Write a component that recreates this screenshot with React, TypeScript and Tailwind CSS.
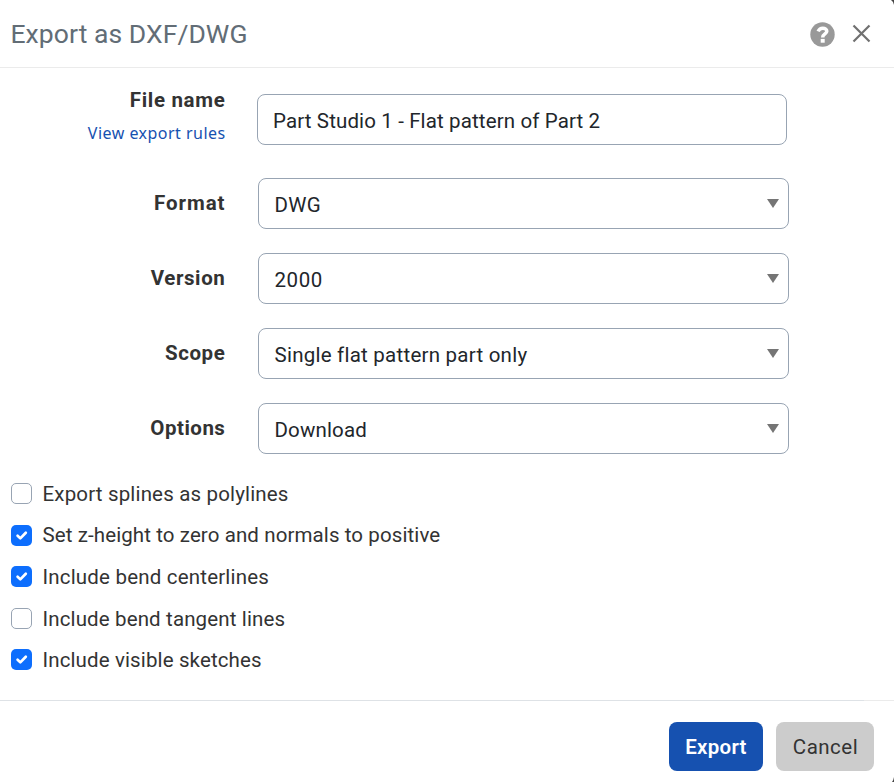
import React from 'react';

type SelectRowProps = { label: string; labelClass: string; value: string; valueClass: string };

function SelectRow({ label, labelClass, value, valueClass }: SelectRowProps) {
  return (
    <div className="flex h-[51px] items-start">
      <label className={`h-[51px] w-[226px] pr-[0.6px] text-right text-[20.5px] leading-[51px] font-bold text-[#333333] ${labelClass}`}>
        {label}
      </label>
      <div className="ml-[32px] flex h-[51px] w-[531px] items-center justify-between rounded-[8px] border border-[#98a4b3] pr-[9px] pl-[15.5px]">
        <span className={`pt-[3px] text-[20.5px] leading-[24px] text-[#22262b] ${valueClass}`}>{value}</span>
        <svg width="12" height="9" viewBox="0 0 12 9" className="mb-px">
          <path d="M0 0H12L6 9Z" fill="#757575" />
        </svg>
      </div>
    </div>
  );
}

type CheckRowProps = { label: string; checked: boolean; rowClass: string; labelClass: string };

function CheckRow({ label, checked, rowClass, labelClass }: CheckRowProps) {
  return (
    <div className={`flex h-[21px] items-start ${rowClass}`}>
      {checked ? (
        <span className="flex size-[21px] items-center justify-center rounded-[5px] bg-[#0d6efd]">
          <svg width="21" height="21" viewBox="0 0 21 21" fill="none">
            <path d="M6.6 10.8L9.3 13.4L14.8 7.8" stroke="#fff" strokeWidth="2.7" strokeLinecap="round" strokeLinejoin="round" />
          </svg>
        </span>
      ) : (
        <span className="size-[21px] rounded-[5px] border border-[#98a4b3] bg-white" />
      )}
      <span className={`ml-[10.5px] text-[20.5px] text-[#333333] ${labelClass}`}>{label}</span>
    </div>
  );
}

export default function App() {
  return (
    <div className="relative flex h-[782px] w-[894px] flex-col overflow-hidden bg-white font-['Roboto',sans-serif] whitespace-nowrap">
      <header className="flex h-[68px] items-center border-b border-[#ebebeb] pl-[10.5px]">
        <h1 className="text-[26.5px] leading-[32px] tracking-[0.06px] text-[#626d76]">Export as DXF/DWG</h1>
        <svg className="mt-[2px] mr-[17px] ml-auto" width="25" height="25" viewBox="0 0 25 25">
          <circle cx="12.5" cy="12.5" r="12.2" fill="#999999" />
          <path d="M8.1 9.4C9.1 7.2 10.6 6.2 12.8 6.2C15.2 6.2 16.8 7.5 16.8 9.3C16.8 12 12.7 11.9 12.7 15.4" fill="none" stroke="#fff" strokeWidth="3.5" />
          <rect x="10.7" y="16.9" width="4" height="3.8" fill="#fff" />
        </svg>
        <svg className="mr-[23px]" width="19" height="19" viewBox="0 0 19 19">
          <path d="M1.5 1.5L17.5 17.5M17.5 1.5L1.5 17.5" stroke="#707070" strokeWidth="2.2" />
        </svg>
      </header>

      <main className="flex flex-col">
        <div className="mt-[26px] flex h-[51px]">
          <div className="flex w-[226px] flex-col items-end">
            <label className="-mt-[6px] pr-[0.6px] text-[20.5px] leading-[24px] font-bold tracking-[0.67px] text-[#333333]">File name</label>
            <a className="mt-[9px] pr-[0.3px] text-[16px] leading-[24px] font-['Noto_Sans',sans-serif] tracking-[0.48px] text-[#1651b0]">View export rules</a>
          </div>
          <div className="ml-[31px] flex h-[51px] w-[530px] items-center rounded-[8px] border border-[#98a4b3] pt-[2px] pl-[15px]">
            <span className="text-[20.5px] leading-[24px] tracking-[0.13px] text-[#22262b]">Part Studio 1 - Flat pattern of Part 2</span>
          </div>
        </div>
        <div className="mt-[33px] flex flex-col gap-[24px]">
          <SelectRow label="Format" labelClass="tracking-[0.92px]" value="DWG" valueClass="tracking-[0.3px]" />
          <SelectRow label="Version" labelClass="tracking-[0.6px]" value="2000" valueClass="tracking-[0.6px]" />
          <SelectRow label="Scope" labelClass="tracking-[0.6px]" value="Single flat pattern part only" valueClass="tracking-[0.24px]" />
          <SelectRow label="Options" labelClass="tracking-[0.5px]" value="Download" valueClass="tracking-[0.15px]" />
        </div>

        <div className="mt-[29px] flex flex-col pl-[11px]">
          <CheckRow label="Export splines as polylines" checked={false} rowClass="" labelClass="leading-[23px] tracking-[0.165px]" />
          <CheckRow label="Set z-height to zero and normals to positive" checked rowClass="mt-[21px]" labelClass="leading-[21px] tracking-[0.1px]" />
          <CheckRow label="Include bend centerlines" checked rowClass="mt-[20px]" labelClass="leading-[23px] tracking-[0.19px]" />
          <CheckRow label="Include bend tangent lines" checked={false} rowClass="mt-[21px]" labelClass="leading-[23px] tracking-[0.135px]" />
          <CheckRow label="Include visible sketches" checked rowClass="mt-[20px]" labelClass="leading-[23px] tracking-[0.126px]" />
        </div>
      </main>

      <footer className="mt-[30px] flex flex-col">
        <div className="flex h-px">
          <div className="w-[864px] bg-[#dee2e6]" />
          <div className="flex-1 bg-[#ebebeb]" />
        </div>
        <div className="mt-[21px] flex justify-end gap-[13px] pr-[20px]">
          <button className="h-[49px] w-[94px] rounded-[8px] bg-[#1651b0] pt-px text-[20.5px] font-semibold tracking-[0.3px] text-white">Export</button>
          <button className="h-[49px] w-[98px] rounded-[8px] bg-[#cccccc] pt-px pl-px text-[20.5px] tracking-[0.5px] text-[#333333]">Cancel</button>
        </div>
      </footer>

      {/* Backdrop showing past the dialog's rounded right corners */}
      <svg className="absolute top-0 right-0" width="3" height="5" viewBox="0 0 3 5">
        <path d="M0 0H3V5Q2.6 1.6 0 0Z" fill="#444" />
      </svg>
      <svg className="absolute right-0 bottom-0" width="2" height="5" viewBox="0 0 2 5">
        <path d="M2 0V5H0Q1.6 3 2 0Z" fill="#444" />
      </svg>
    </div>
  );
}
